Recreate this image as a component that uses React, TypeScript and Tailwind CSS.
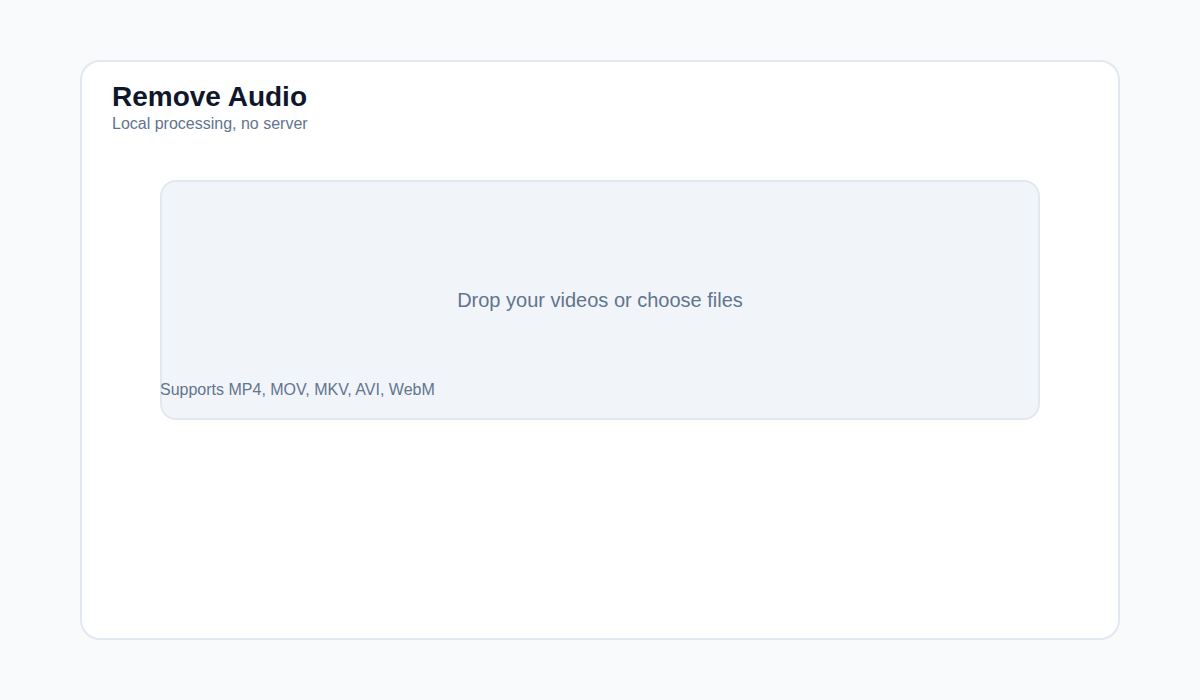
export default function App() {
  return (
    <div
      className="min-h-[700px] bg-slate-50 px-20 py-[60px]"
      style={{ fontFamily: '"Liberation Sans", Arial, sans-serif' }}
    >
      <div className="h-[580px] rounded-[20px] border-2 border-slate-200 bg-white px-[30px] pt-[18px]">
        <h1 className="text-[28px] font-bold leading-[34px] text-slate-900">Remove Audio</h1>
        <p className="text-base leading-5 text-slate-500">Local processing, no server</p>

        <div className="relative mx-auto mt-[46px] flex h-[240px] w-[880px] items-center justify-center rounded-2xl border-2 border-slate-200 bg-slate-100">
          <span className="text-xl text-slate-500">Drop your videos or choose files</span>
          <span className="absolute bottom-[18px] left-[-2px] text-base leading-5 text-slate-500">
            Supports MP4, MOV, MKV, AVI, WebM
          </span>
        </div>
      </div>
    </div>
  );
}
